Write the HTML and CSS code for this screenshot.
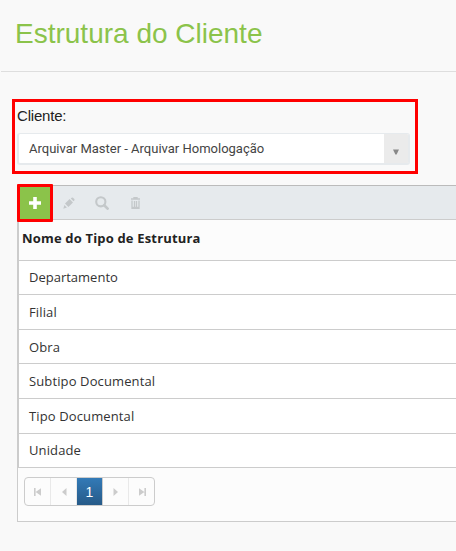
FILE: index.html
```
<!DOCTYPE html>
<html lang="pt-BR">
<head>
<meta charset="utf-8">
<title>Estrutura do Cliente</title>
<link rel="stylesheet" href="styles.css">
</head>
<body>
<header class="page-header"><h1>Estrutura do Cliente</h1></header>
<main>
  <section class="client">
    <label class="client-label">Cliente:</label>
    <div class="select">
      <span class="select-text">Arquivar Master - Arquivar Homologação</span>
      <span class="select-button"><svg width="6" height="6" viewBox="0 0 6 6"><path d="M0 .5h6L3.6 5.5H2.4z" fill="#888"/></svg></span>
    </div>
  </section>
  <section class="grid">
    <div class="toolbar">
      <button class="tool add" aria-label="Adicionar"><svg width="12" height="12" viewBox="0 0 12 12"><path d="M4.2 0h3.6v4.2H12v3.5H7.8V12H4.2V7.7H0V4.2h4.2z" fill="#fff"/></svg></button>
      <button class="tool edit" aria-label="Editar"><svg width="12" height="12" viewBox="0 0 12 12"><path d="M8.6 .7Q9.3.1 10 .7L11.3 2Q11.9 2.7 11.3 3.4L10.5 4.2 7.8 1.5zM6.6 2L10 5.4 5.4 10 2 6.6zM1.4 8.1l2.5 2.5L.3 11.7z" fill="#c4c8ca"/></svg></button>
      <button class="tool search" aria-label="Pesquisar"><svg width="14" height="14" viewBox="0 0 14 14" fill="none" stroke="#c4c8ca"><circle cx="5.8" cy="5.8" r="4.6" stroke-width="2.1"/><path d="M9.2 9.2l3.4 3.4" stroke-width="2.7" stroke-linecap="round"/></svg></button>
      <button class="tool remove" aria-label="Excluir"><svg width="9" height="12" viewBox="0 0 9 12" fill="none" stroke="#c4c8ca"><path d="M0 2h9M3 1.8V.6h3v1.2" stroke-width="1.4"/><path d="M1 3.5v7.8h7V3.5M3.5 4v7M5.5 4v7" stroke-width="1.3"/><path d="M1 10.6h7" stroke-width="1.6"/></svg></button>
    </div>
    <div class="table">
      <div class="head">Nome do Tipo de Estrutura</div>
      <div class="row first">Departamento</div>
      <div class="row">Filial</div>
      <div class="row">Obra</div>
      <div class="row">Subtipo Documental</div>
      <div class="row">Tipo Documental</div>
      <div class="row last">Unidade</div>
    </div>
    <nav class="pager">
      <span class="page"><svg width="8" height="8" viewBox="0 0 8 8"><path d="M0 0h1.6v8H0zM7 .2v7.6L1.6 4z"/></svg></span>
      <span class="page"><svg width="8" height="8" viewBox="0 0 8 8"><path d="M6.5 0v8L2 4z"/></svg></span>
      <span class="page current">1</span>
      <span class="page"><svg width="8" height="8" viewBox="0 0 8 8"><path d="M1.5 0v8L6 4z"/></svg></span>
      <span class="page"><svg width="8" height="8" viewBox="0 0 8 8"><path d="M6.4 0H8v8H6.4zM1 .2v7.6L6.4 4z"/></svg></span>
    </nav>
  </section>
</main>
</body>
</html>
```

FILE: styles.css
```
* { box-sizing: border-box; }
body {
  margin: 0;
  height: 551px;
  overflow: hidden;
  background: #f9f9f9;
  color: #333;
  font-family: "Liberation Sans", Arial, sans-serif;
}
.page-header {
  height: 72px;
  margin-left: 1px;
  padding: 18px 0 0 14px;
  border-bottom: 1px solid #dedede;
}
h1 {
  margin: 0;
  color: #8bc34a;
  font-size: 28px;
  font-weight: 400;
  line-height: 32px;
}
.client {
  width: 406px;
  height: 75px;
  margin: 27px 0 0 12px;
  padding: 5px 5px 0 2px;
  border: 3px solid #f00;
}
.client-label {
  display: block;
  height: 26px;
  color: #222;
  font-size: 15px;
  line-height: 18px;
  letter-spacing: -.2px;
}
.select {
  display: flex;
  width: 393px;
  height: 32px;
  border: 1px solid #e6eaed;
  border-left-width: 2px;
  border-bottom-width: 2px;
  border-radius: 3px;
  background: #fff;
  overflow: hidden;
}
.select-text {
  flex: 1;
  padding-left: 10px;
  color: #444;
  font: 13px/30px Roboto, sans-serif;
  white-space: nowrap;
}
.select-button {
  display: flex;
  justify-content: center;
  width: 25px;
  padding-top: 15px;
  border-right: 1px solid #e6eaed;
  background: #ebebeb;
}
.grid {
  height: 337px;
  margin: 11px 0 0 17px;
  border: solid #ccc;
  border-width: 1px 0 1px 1px;
  border-top-color: #bbb;
  background: #fcfcfc;
}
.toolbar {
  display: flex;
  align-items: center;
  height: 34px;
  border-bottom: 1px solid #ccc;
  background: #e6eaed;
}
.tool {
  display: flex;
  align-items: center;
  justify-content: center;
  width: 33px;
  height: 34px;
  padding: 1px 0 0;
  border: 0;
  background: none;
}
.add {
  z-index: 1;
  flex: none;
  align-self: flex-start;
  width: 36px;
  height: 38px;
  margin: -2px 0 0 -1px;
  padding: 0;
  border: 3px solid #f00;
  border-radius: 1px;
  background: #8bc34a;
}
.edit { padding-right: 1px; }
.search { padding-right: 1px; }
.table {
  display: grid;
  grid-template-rows: 41px 34px 35px 34px 35px 35px 34px;
  border-left: 1px solid #ccc;
  font-family: "Open Sans", "Noto Sans", sans-serif;
}
.head, .row { border-bottom: 1px solid #ccc; }
.head {
  padding-left: 3px;
  color: #222;
  font-size: 13px;
  font-weight: 700;
  line-height: 37px;
  letter-spacing: .17px;
}
.row {
  padding-left: 10px;
  background: #fff;
  font-size: 13px;
  line-height: 34px;
  letter-spacing: .12px;
}
.first, .last { line-height: 32px; }
.first { letter-spacing: 0; }
.pager {
  display: flex;
  width: 131px;
  height: 29px;
  margin: 9px 0 0 6px;
  border: 1px solid #ccc;
  border-radius: 4px;
  overflow: hidden;
}
.page {
  display: flex;
  flex: 1;
  align-items: center;
  justify-content: center;
  border-right: 1px solid #e9e9e9;
  fill: #ccc;
}
.page:last-child { border-right: 0; }
.current {
  border-right-color: #ccc;
  background: linear-gradient(#337ab7, #265a88);
  color: #fff;
  font-size: 14px;
}
```
